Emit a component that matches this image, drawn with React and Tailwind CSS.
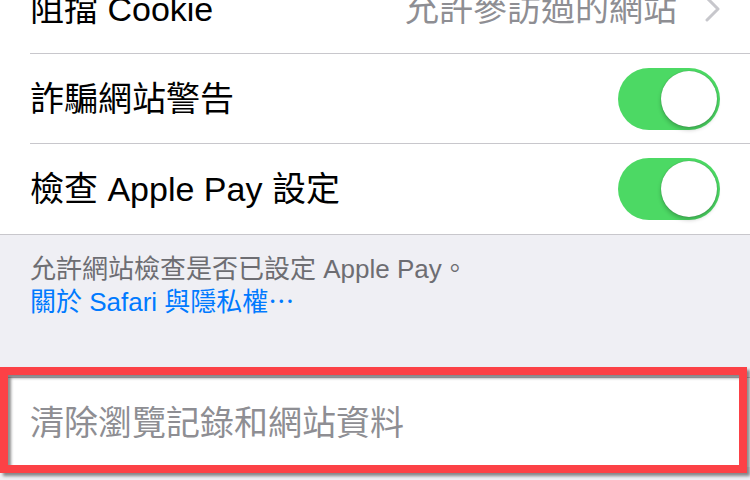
import { useState } from "react";

const font = {
  fontFamily: '"Liberation Sans", "Noto Sans CJK TC", sans-serif',
};

function Toggle({ on, onChange }) {
  return (
    <button
      onClick={() => onChange(!on)}
      className={`relative h-[62px] w-[102px] shrink-0 rounded-full ${
        on ? "bg-[#4cd964]" : "bg-[#e5e5ea]"
      }`}
    >
      <span
        className={`absolute top-[3px] h-[56px] w-[56px] rounded-full bg-white shadow-[0_3px_4px_rgba(0,0,0,0.22),0_0_1px_rgba(0,0,0,0.35)] ${
          on ? "right-[3px]" : "left-[3px]"
        }`}
      />
    </button>
  );
}

function Row({ label, last, children, className = "" }) {
  return (
    <div className={`flex h-[90px] pl-[30px] ${className}`}>
      <div
        className={`flex flex-1 items-center justify-between pr-[30px] ${
          last ? "" : "border-b border-[#c8c7cc]"
        }`}
      >
        <span className="text-[34px] leading-none text-black">{label}</span>
        {children}
      </div>
    </div>
  );
}

export default function App() {
  const [fraud, setFraud] = useState(true);
  const [applePay, setApplePay] = useState(true);

  return (
    <div
      style={font}
      className="relative h-[480px] w-[750px] overflow-hidden bg-[#efeff4]"
    >
      {/* settings group */}
      <div className="border-b border-[#c8c7cc] bg-white">
        <Row label="阻擋 Cookie" className="-mt-[36px]">
          <div className="flex items-center gap-[28px]">
            <span className="text-[34px] leading-none text-[#8e8e93]">
              允許參訪過的網站
            </span>
            <svg width="15" height="26" viewBox="0 0 15 26" fill="none">
              <path
                d="M2 2l11 11L2 24"
                stroke="#c7c7cc"
                strokeWidth="3"
                strokeLinecap="round"
                strokeLinejoin="round"
              />
            </svg>
          </div>
        </Row>
        <Row label="詐騙網站警告">
          <Toggle on={fraud} onChange={setFraud} />
        </Row>
        <Row label="檢查 Apple Pay 設定" last>
          <Toggle on={applePay} onChange={setApplePay} />
        </Row>
      </div>

      {/* footer note */}
      <div className="h-[142px] px-[30px] pt-[18px] text-[26px] leading-[33px]">
        <p className="text-[#6d6d72]">允許網站檢查是否已設定 Apple Pay。</p>
        <p className="text-[#007aff]">關於 Safari 與隱私權⋯</p>
      </div>

      {/* clear history */}
      <div className="flex h-[90px] items-center border-t border-[#c8c7cc] bg-white px-[30px]">
        <span className="text-[34px] leading-none text-[#8e8e93]">
          清除瀏覽記錄和網站資料
        </span>
      </div>

      {/* highlight annotation */}
      <div className="pointer-events-none absolute left-0 top-[367px] h-[106px] w-[747px] border-[8px] border-[#fc4146] shadow-[3px_3px_3px_rgba(0,0,0,0.45),inset_3px_3px_3px_rgba(0,0,0,0.45)]" />
    </div>
  );
}
